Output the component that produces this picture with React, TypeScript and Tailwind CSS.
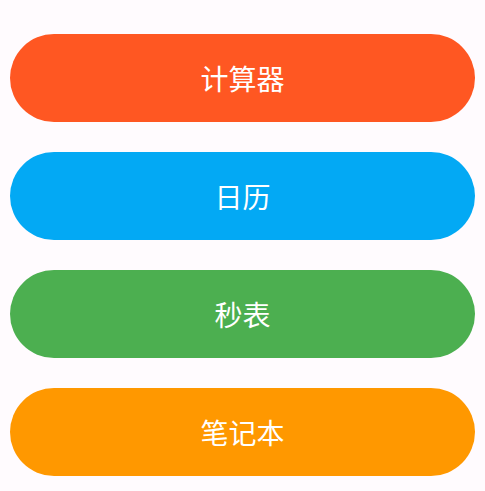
const items = [
  { label: "计算器", color: "bg-[#ff5722]" },
  { label: "日历", color: "bg-[#03a9f4]" },
  { label: "秒表", color: "bg-[#4caf50]" },
  { label: "笔记本", color: "bg-[#ff9800]" },
];

export default function App() {
  return (
    <div
      className="min-h-[491px] bg-[#fffbfe] px-[10px] pt-[34px]"
      style={{ fontFamily: '"Noto Sans CJK SC", "Noto Sans", sans-serif' }}
    >
      <div className="flex flex-col gap-[30px]">
        {items.map((it) => (
          <button
            key={it.label}
            type="button"
            className={`flex h-[88px] w-full items-center justify-center rounded-full text-[28px] leading-none text-white ${it.color}`}
          >
            {it.label}
          </button>
        ))}
      </div>
    </div>
  );
}
